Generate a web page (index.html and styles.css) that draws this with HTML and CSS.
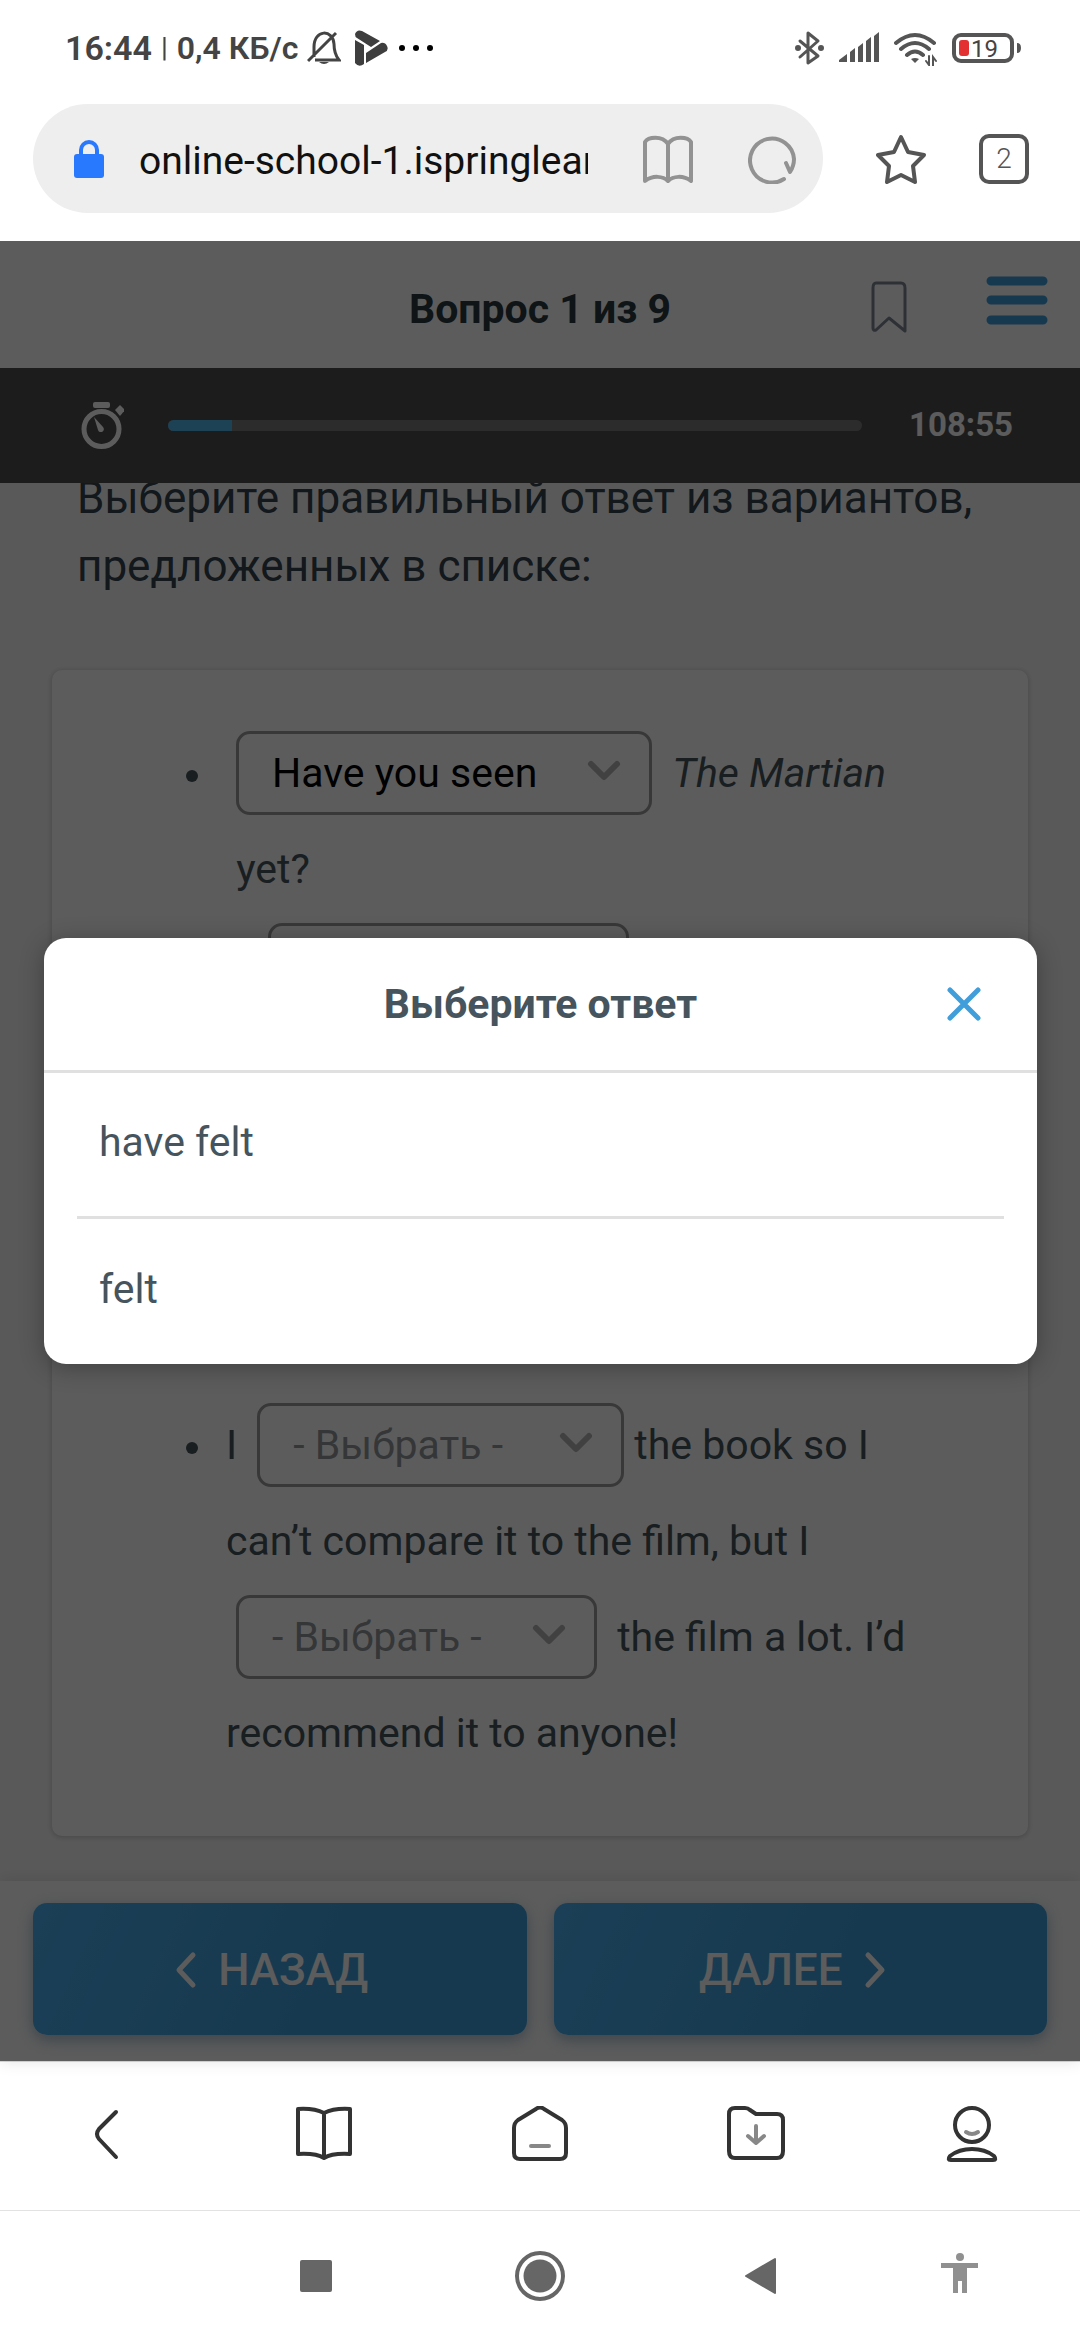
FILE: index.html
```html
<!DOCTYPE html>
<html lang="ru">
<head>
<meta charset="utf-8">
<meta name="viewport" content="width=device-width, initial-scale=1">
<title>Вопрос 1 из 9</title>
<link rel="stylesheet" href="styles.css">
</head>
<body>
<header class="status">
  <div class="status-left">
    <span class="clock">16:44</span>
    <span class="bar">|</span>
    <span class="speed">0,4 КБ/с</span>
    <svg class="bell" width="34" height="36" viewBox="308 30 34 36" fill="none" stroke="#444" stroke-width="3"><path d="M315 57V47C315 29 334 29 335 44C335 50 336 55 340 60H316M309 61L337 33"/><path d="M320 62h10q-5 4-10 0z" fill="#444" stroke="none"/></svg>
    <svg width="36" height="38" viewBox="356 28 36 38" fill="#3e3e3e"><path d="M357 39L366 44V63Q361 67 357 62zM357 33Q359 28 364 30L382 40L373 46L359 37Q357 36 357 33zM368 52L383 42Q387 41 389 45Q391 49 387 51L368 62z"/></svg>
    <svg width="36" height="8" viewBox="400 43 36 8"><circle cx="404" cy="47" r="3"/><circle cx="418" cy="47" r="3"/><circle cx="432" cy="47" r="3"/></svg>
  </div>
  <div class="status-right">
    <svg width="30" height="36" viewBox="795 30 30 36" fill="none" stroke="#555" stroke-width="3" stroke-linecap="round" stroke-linejoin="round"><path d="M800 41L818 56L808 63V33L818 41L800 57"/><circle cx="798" cy="48" r="1.500"/><circle cx="821" cy="48" r="1.500"/></svg>
    <svg width="41" height="36" viewBox="838 30 41 36" fill="#555"><path d="M838 60L846 54V62H838zM849 52L854 48V62H849zM857 47L862 43V62H857zM865 41L870 37V62H865zM873 36L878 32V62H873z"/></svg>
    <svg width="43" height="36" viewBox="894 30 43 36" fill="none" stroke="#555" stroke-width="4" stroke-linecap="round"><path d="M896 43Q915 27 934 43M901 49Q915 37 929 49M907 55Q915 48 923 55"/><path d="M911 59Q915 57 919 59L915 63z" fill="#555" stroke="none"/><path d="M929 56V65L926 61M933 66V57L936 61" stroke-width="2"/></svg>
    <svg width="70" height="36" viewBox="951 30 70 36"><rect x="954" y="35" width="58" height="26" rx="7" fill="none" stroke="#555" stroke-width="4"/><path d="M1017 43q4 0 4 5t-4 5z" fill="#555"/><rect x="959" y="40" width="10" height="16" rx="3" fill="#e33030"/><text x="971" y="57" class="charge">19</text></svg>
  </div>
</header>

<div class="toolbar">
  <div class="address">
    <svg width="30" height="38" viewBox="74 139 30 38" fill="#2979ff"><rect x="74" y="153" width="30" height="24" rx="3"/><path d="M81 154v-5a8 8 0 0 1 16 0v5" fill="none" stroke="#2979ff" stroke-width="4"/></svg>
    <input class="url" type="text" aria-label="Адрес" value="online-school-1.ispringlearn.ru">
    <button class="icon" type="button" aria-label="Режим чтения"><svg width="50" height="50" viewBox="643 133 50 50" fill="none" stroke="#929292" stroke-width="4" stroke-linejoin="round"><path d="M668 143C662 134 648 136 645 141V180C653 174 663 175 668 180C673 175 683 174 691 180V141C688 136 674 134 668 143V180"/></svg></button>
    <button class="icon" type="button" aria-label="Обновить"><svg width="50" height="50" viewBox="748 133 50 50" fill="none" stroke="#929292" stroke-width="4" stroke-linecap="round" stroke-linejoin="round"><path d="M784 178A22 22 0 1 1 794 158Q794 165 790 171L786 162"/></svg></button>
  </div>
  <button class="icon" type="button" aria-label="В закладки"><svg width="50" height="50" viewBox="876 133 50 50" fill="none" stroke="#555" stroke-width="4" stroke-linejoin="round"><path d="M901 136L908 151L924 154L913 165L915 181L901 174L887 181L889 165L878 154L894 151z"/></svg></button>
  <button class="icon tabs" type="button" aria-label="Вкладки">2</button>
</div>

<main class="quiz">
  <header class="quiz-head">
    <h1 class="quiz-title">Вопрос 1 из 9</h1>
    <div class="quiz-tools">
      <button class="icon" type="button" aria-label="Отметить вопрос"><svg width="36" height="54" viewBox="872 281 36 54" fill="none" stroke="#7d8893" stroke-width="3" stroke-linejoin="round"><path d="M877 284H902Q906 284 906 289V332L890 319L877 331Q874 332 874 329V289Q874 284 877 284z"/></svg></button>
      <button class="icon" type="button" aria-label="Меню"><svg width="62" height="62" viewBox="987 277 62 62" stroke="#409edb" stroke-width="9" stroke-linecap="round"><path d="M992 282H1044M992 301H1044M992 321H1044"/></svg></button>
    </div>
  </header>

  <div class="timer">
    <svg width="44" height="50" viewBox="80 400 44 50" fill="#fff"><rect x="93" y="401" width="17" height="6" rx="2"/><path d="M115 409l5-5 5 5-5 6z"/><circle cx="101.500" cy="428" r="17.500" fill="none" stroke="#fff" stroke-width="5"/><path d="M94 416l9 10a3 3 0 1 1-5 3z"/></svg>
    <div class="track"><div class="fill" style="width:9.2%"></div></div>
    <span class="time">108:55</span>
  </div>

  <div class="quiz-body">
    <p class="prompt">Выберите правильный ответ из вариантов, предложенных в списке:</p>
    <div class="card">
      <ul class="lines">
        <li><span class="pick pick-l"><select class="picked" aria-label="Пропуск 1"><option>Have you seen</option></select><svg class="chev" width="34" height="22" viewBox="0 0 34 22"><path d="M4 4L17 17L30 4"/></svg></span> <em>The Martian</em> &nbsp;yet?</li>
        <li class="tall">I&nbsp; <span class="pick pick-s"><select aria-label="Пропуск 2"><option>- Выбрать -</option><option>have felt</option><option>felt</option></select><svg class="chev" width="34" height="22" viewBox="0 0 34 22"><path d="M4 4L17 17L30 4"/></svg></span></li>
        <li>I <span class="pick pick-m"><select aria-label="Пропуск 3"><option>- Выбрать -</option></select><svg class="chev" width="34" height="22" viewBox="0 0 34 22"><path d="M4 4L17 17L30 4"/></svg></span>the book so I can’t compare it to the film, but I <span class="pick pick-s"><select aria-label="Пропуск 4"><option>- Выбрать -</option></select><svg class="chev" width="34" height="22" viewBox="0 0 34 22"><path d="M4 4L17 17L30 4"/></svg></span> the film a lot. I’d recommend it to anyone!</li>
      </ul>
    </div>
  </div>

  <footer class="quiz-foot">
    <button class="step" type="button"><svg width="22" height="38" viewBox="0 0 22 38"><path d="M18 4L4 19L18 34"/></svg>НАЗАД</button>
    <button class="step" type="button">ДАЛЕЕ<svg width="22" height="38" viewBox="0 0 22 38"><path d="M4 4L18 19L4 34"/></svg></button>
  </footer>

  <div class="overlay">
    <section class="modal" role="dialog" aria-labelledby="modal-title">
      <header class="modal-head">
        <h2 class="modal-title" id="modal-title">Выберите ответ</h2>
        <button class="icon close" type="button" aria-label="Закрыть"><svg width="36" height="36" viewBox="0 0 36 36" fill="none" stroke="#409edb" stroke-width="5" stroke-linecap="round"><path d="M4 4L32 32M32 4L4 32"/></svg></button>
      </header>
      <div class="answers">
        <button class="answer" type="button">have felt</button>
        <button class="answer" type="button">felt</button>
      </div>
    </section>
  </div>
</main>

<nav class="browser-nav" aria-label="Браузер">
  <button class="icon" type="button" aria-label="Назад"><svg width="60" height="60" viewBox="78 2107 60 60"><path d="M116 2113L99 2130Q95 2135 99 2140L116 2158"/></svg></button>
  <button class="icon" type="button" aria-label="Чтение"><svg width="60" height="60" viewBox="294 2107 60 60"><path d="M324 2114Q314 2109 298 2110V2155Q316 2154 324 2159Q332 2154 350 2155V2110Q334 2109 324 2114V2159"/></svg></button>
  <button class="icon" type="button" aria-label="Домой"><svg width="60" height="60" viewBox="510 2107 60 60"><path d="M518 2121L536 2110Q540 2107 544 2110L562 2121Q566 2124 566 2129V2154Q566 2160 560 2160H520Q514 2160 514 2154V2129Q514 2124 518 2121z"/><path class="soft" d="M531 2147H549"/></svg></button>
  <button class="icon" type="button" aria-label="Загрузки"><svg width="60" height="60" viewBox="726 2107 60 60"><path d="M735 2109H745Q748 2109 750 2111L756 2115H777Q783 2115 783 2121V2152Q783 2159 777 2159H735Q729 2159 729 2152V2115Q729 2109 735 2109z"/><path class="soft" d="M756 2127V2144M748 2137L756 2144L764 2137"/></svg></button>
  <button class="icon" type="button" aria-label="Профиль"><svg width="60" height="60" viewBox="942 2107 60 60"><circle cx="972" cy="2126" r="17"/><path d="M951 2161H993Q997 2161 994 2157Q985 2150 972 2150Q959 2150 950 2157Q947 2161 951 2161z"/><path class="soft" d="M966 2133Q972 2137 978 2133"/></svg></button>
</nav>

<nav class="system-nav" aria-label="Система">
  <button class="icon" type="button" aria-label="Недавние"><svg width="60" height="60" viewBox="294 2245 60 60" fill="#666"><rect x="300" y="2259" width="32" height="32" rx="2"/></svg></button>
  <button class="icon" type="button" aria-label="Главный экран"><svg width="60" height="60" viewBox="510 2245 60 60" fill="#666"><circle cx="540" cy="2275" r="16.500"/><circle cx="540" cy="2275" r="23" fill="none" stroke="#666" stroke-width="4"/></svg></button>
  <button class="icon" type="button" aria-label="Вернуться"><svg width="60" height="60" viewBox="726 2245 60 60" fill="#666" stroke="#666" stroke-width="2" stroke-linejoin="round"><path d="M775 2258V2292L746 2275z"/></svg></button>
  <button class="icon" type="button" aria-label="Спец. возможности"><svg width="60" height="60" viewBox="942 2245 60 60" fill="#909090" overflow="visible"><circle cx="960" cy="2256" r="4"/><path d="M941 2262H978V2267H967V2292H962V2280H958V2292H953V2267H941z"/></svg></button>
</nav>
</body>
</html>
```
FILE: styles.css
```css
* {
  box-sizing: border-box;
}

body {
  margin: 0;
  min-height: 100vh;
  display: flex;
  flex-direction: column;
  background: #fff;
  color: #46545d;
  font-family: Roboto, "Noto Sans", sans-serif;
  font-size: 41px;
}

button,
input,
select {
  margin: 0;
  padding: 0;
  border: 0;
  background: none;
  color: inherit;
  font: inherit;
}

svg {
  display: block;
  flex: none;
}

.icon {
  display: grid;
  place-items: center;
  flex: none;
}

/* Phone status bar */
.status {
  height: 96px;
  padding: 0 59px 0 65px;
  display: flex;
  align-items: center;
  justify-content: space-between;
  color: #444;
}

.status-left {
  display: flex;
  align-items: center;
  font-size: 34px;
  font-weight: 600;
  line-height: 40px;
}

.bar {
  margin: 0 9px;
  font-size: 28px;
  font-weight: 400;
}

.speed {
  font-size: 32px;
}

.bell {
  margin: 0 13px 0 9px;
}

.status-left svg:last-child {
  margin-left: 8px;
}

.status-right {
  display: flex;
  align-items: center;
  gap: 14px;
}

.charge {
  font-size: 24px;
  fill: #444;
}

/* Address bar */
.toolbar {
  padding: 8px 51px 28px 33px;
  display: flex;
  align-items: center;
  gap: 53px;
}

.address {
  flex: 1;
  min-width: 0;
  height: 109px;
  padding: 0 25px 0 41px;
  display: flex;
  align-items: center;
  border-radius: 55px;
  background: #eee;
}

.url {
  flex: 1;
  min-width: 0;
  margin: 0 55px 0 35px;
  padding-top: 4px;
  color: #111;
  font-size: 39px;
}

.address .icon + .icon {
  margin-left: 55px;
}

.tabs {
  width: 50px;
  height: 50px;
  border: 4px solid #555;
  border-radius: 10px;
  color: #555;
  font-size: 28px;
  font-weight: 300;
  line-height: 40px;
}

/* Quiz */
.quiz {
  flex: 1;
  position: relative;
  display: flex;
  flex-direction: column;
  background: #f7f7f7;
}

.quiz-head {
  height: 127px;
  padding: 5px 32px 0;
  display: grid;
  grid-template-columns: 1fr auto 1fr;
  align-items: center;
  background: #fff;
}

.quiz-title {
  grid-column: 2;
  margin: 0;
  padding-top: 3px;
  color: #2b3840;
  font-size: 41px;
  font-weight: 700;
}

.quiz-tools {
  display: flex;
  justify-content: flex-end;
  align-items: center;
  gap: 79px;
}

.timer {
  height: 115px;
  padding: 0 67px 0 80px;
  display: flex;
  align-items: center;
  background: #4e4e4e;
}

.track {
  flex: 1;
  height: 11px;
  margin: 0 47px 0 44px;
  border-radius: 6px;
  overflow: hidden;
  background: #7a7a7a;
}

.fill {
  height: 100%;
  background: #50b4ea;
}

.time {
  padding-bottom: 2px;
  color: #fff;
  font-size: 33px;
  font-weight: 700;
}

.quiz-body {
  flex: 1;
  padding: 0 52px 45px;
  overflow: hidden;
}

.prompt {
  margin: -19px 0 70px;
  padding: 0 25px;
  color: #32434e;
  font-size: 44px;
  line-height: 68px;
}

.card {
  padding: 55px 86px 55px 174px;
  border-radius: 10px;
  background: #fff;
  box-shadow: 0 1px 5px 1px rgba(0, 0, 0, 0.16);
}

.lines {
  margin: 0;
  padding: 0;
  list-style: none;
  line-height: 96px;
}

.lines li::before {
  content: "";
  display: inline-block;
  width: 12px;
  height: 12px;
  margin: 0 28px 0 -40px;
  border-radius: 50%;
  vertical-align: middle;
  background: #46545d;
}

.tall {
  min-height: 480px;
}

.pick {
  position: relative;
  display: inline-block;
  height: 84px;
  margin: 0 10px;
  line-height: 78px;
}

.pick select {
  width: 100%;
  height: 84px;
  padding: 0 0 0 33px;
  border: 3px solid #9c9c9c;
  border-radius: 14px;
  appearance: none;
  color: #92979b;
}

.pick .picked {
  color: #000;
}

.pick-l {
  width: 416px;
}

.pick-m {
  width: 367px;
}

.pick-s {
  width: 361px;
}

.chev {
  position: absolute;
  top: 29px;
  right: 31px;
  fill: none;
  stroke: #b4b4b4;
  stroke-width: 6px;
  stroke-linecap: round;
  stroke-linejoin: round;
  pointer-events: none;
}

.quiz-foot {
  padding: 22px 33px 26px;
  display: grid;
  grid-template-columns: 1fr 1fr;
  gap: 27px;
  background: #fff;
  box-shadow: 0 0 16px rgba(0, 0, 0, 0.12);
}

.step {
  height: 132px;
  padding: 2px 16px 0 0;
  display: flex;
  align-items: center;
  justify-content: center;
  gap: 21px;
  border-radius: 14px;
  background: linear-gradient(115deg, #4ab0ee, #409edb 60%);
  box-shadow: 0 5px 16px rgba(64, 110, 150, 0.45);
  color: #fff;
  font-size: 44px;
  font-weight: 500;
}

.step svg {
  fill: none;
  stroke: #fff;
  stroke-width: 5px;
  stroke-linecap: round;
  stroke-linejoin: round;
}

/* Answer picker */
.overlay {
  position: absolute;
  inset: 0;
  padding: 0 43px 0 44px;
  display: flex;
  align-items: center;
  background: rgba(0, 0, 0, 0.64);
}

.modal {
  flex: 1;
  border-radius: 22px;
  background: #fff;
  box-shadow: 0 4px 24px rgba(0, 0, 0, 0.3);
}

.modal-head {
  height: 135px;
  padding: 0 55px;
  display: grid;
  grid-template-columns: 1fr auto 1fr;
  align-items: center;
  border-bottom: 3px solid #e0e0e0;
}

.modal-title {
  grid-column: 2;
  margin: 0;
  font-size: 41px;
  font-weight: 700;
}

.close {
  justify-self: end;
}

.answers {
  padding: 0 33px;
}

.answer {
  display: block;
  width: 100%;
  height: 143px;
  padding: 0 22px 6px;
  text-align: left;
}

.answer + .answer {
  height: 148px;
  border-top: 3px solid #e0e0e0;
}

/* Bottom bars */
.browser-nav,
.system-nav {
  display: grid;
  grid-template-columns: repeat(5, 1fr);
  align-items: center;
  background: #fff;
}

.browser-nav {
  height: 149px;
  border-top: 1px solid #d8d8d8;
  fill: none;
  stroke: #333;
  stroke-width: 4px;
  stroke-linecap: round;
  stroke-linejoin: round;
}

.soft {
  stroke: #888;
}

.system-nav {
  height: 130px;
  border-top: 1px solid #e2e2e2;
}

.system-nav .icon:first-child {
  grid-column-start: 2;
}
```
